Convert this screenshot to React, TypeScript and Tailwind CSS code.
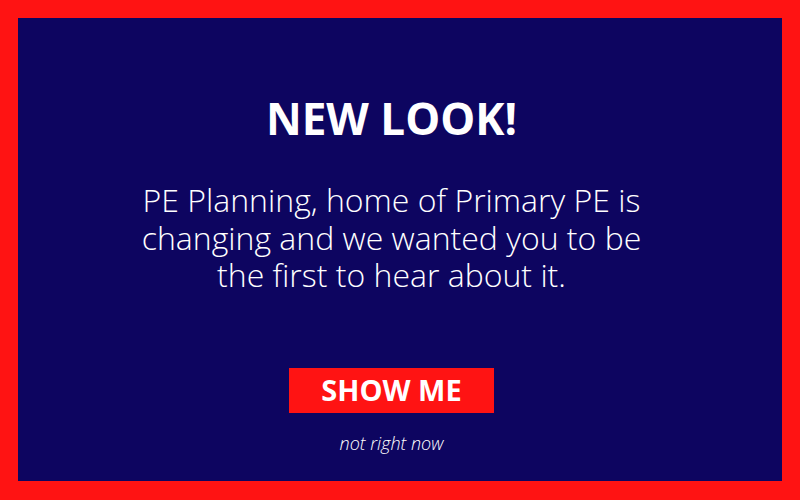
export default function App() {
  return (
    <div className="h-[500px] w-full bg-[#ff1313] pt-[18px] pl-[18px] pr-[18px] pb-[19px]">
      <div
        className="flex h-full flex-col items-center bg-[#0d0560] pr-[17px] text-white"
        style={{ fontFamily: '"Open Sans", sans-serif' }}
      >
        <h1 className="mt-[78px] text-[44px] font-bold leading-none">NEW LOOK!</h1>
        <p className="mt-[41px] text-center text-[32px] font-light leading-[37.5px]">
          PE Planning, home of Primary PE is
          <br />
          changing and we wanted you to be
          <br />
          the first to hear about it.
        </p>
        <button className="mt-[74px] flex h-[45px] w-[205px] items-center justify-center bg-[#ff1313] text-[29px] font-bold text-white">
          SHOW ME
        </button>
        <span className="mt-[21px] text-[18px] font-light italic leading-none">not right now</span>
      </div>
    </div>
  );
}
